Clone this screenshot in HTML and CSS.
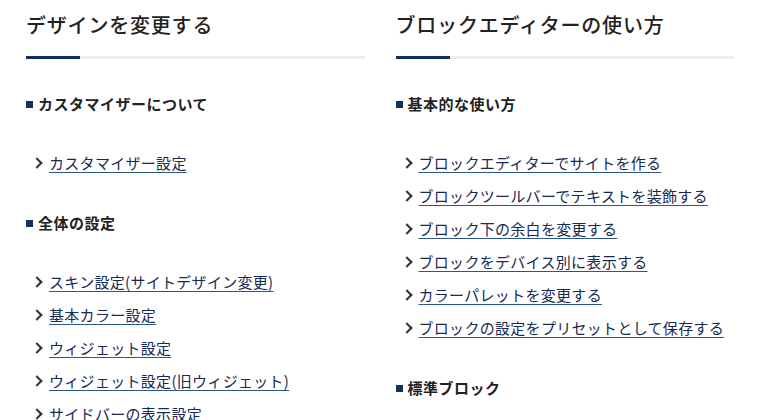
FILE: index.html
```html
<!DOCTYPE html>
<html lang="ja">
<head>
  <meta charset="UTF-8" />
  <meta name="viewport" content="width=device-width, initial-scale=1.0"/>
  <title>マニュアル</title>
  <link rel="stylesheet" href="styles.css">
</head>
<body>
  <div class="columns">
    <!-- 左カラム -->
    <section class="col">
      <h2 class="col-title">デザインを変更する</h2>
      <h3 class="sub-title">カスタマイザーについて</h3>
      <ul class="link-list">
        <li><a href="#">カスタマイザー設定</a></li>
      </ul>
      <h3 class="sub-title">全体の設定</h3>
      <ul class="link-list">
        <li><a href="#">スキン設定(サイトデザイン変更)</a></li>
        <li><a href="#">基本カラー設定</a></li>
        <li><a href="#">ウィジェット設定</a></li>
        <li><a href="#">ウィジェット設定(旧ウィジェット)</a></li>
        <li><a href="#">サイドバーの表示設定</a></li>
      </ul>
    </section>

    <!-- 右カラム -->
    <section class="col">
      <h2 class="col-title">ブロックエディターの使い方</h2>
      <h3 class="sub-title">基本的な使い方</h3>
      <ul class="link-list">
        <li><a href="#">ブロックエディターでサイトを作る</a></li>
        <li><a href="#">ブロックツールバーでテキストを装飾する</a></li>
        <li><a href="#">ブロック下の余白を変更する</a></li>
        <li><a href="#">ブロックをデバイス別に表示する</a></li>
        <li><a href="#">カラーパレットを変更する</a></li>
        <li><a href="#">ブロックの設定をプリセットとして保存する</a></li>
      </ul>
      <h3 class="sub-title">標準ブロック</h3>
    </section>
  </div>
</body>
</html>
```

FILE: styles.css
```css
* { box-sizing: border-box; }
body { margin: 0; background: #fff; color: #222; font-family: "Noto Sans CJK JP", "Noto Sans", sans-serif; }
.columns { display: grid; grid-template-columns: 1fr 1fr; column-gap: 31px; padding: 10px 26px 0; }
.col { min-width: 0; }

/* 見出し + 下線 */
.col-title { position: relative; margin: 0 0 33px; padding-bottom: 16px; border-bottom: 3px solid #eeeeee; font-size: 20px; font-weight: 500; line-height: 30px; letter-spacing: 0.8px; color: #222; }
.col-title::after { content: ""; position: absolute; left: 0; bottom: -3px; width: 54px; height: 3px; background: #12305e; }

/* 小見出し */
.sub-title { display: flex; align-items: center; margin: 0 0 30px; font-size: 15px; font-weight: 700; line-height: 24px; letter-spacing: 0.5px; color: #222; }
.sub-title::before { content: ""; width: 7px; height: 7px; margin-right: 5px; background: #12305e; }

/* リンク一覧 */
.link-list { list-style: none; margin: 0 0 32px; padding: 0; }
.link-list li { position: relative; padding-left: 23px; line-height: 33px; font-size: 15px; letter-spacing: 0.3px; white-space: nowrap; }
.link-list li::before { content: ""; position: absolute; left: 7px; top: 13px; width: 6px; height: 6px; border-top: 2px solid #333; border-right: 2px solid #333; transform: rotate(45deg); }
.link-list a { color: #172a50; text-decoration: underline; text-decoration-color: #2d5688; text-underline-offset: 3px; }
```
